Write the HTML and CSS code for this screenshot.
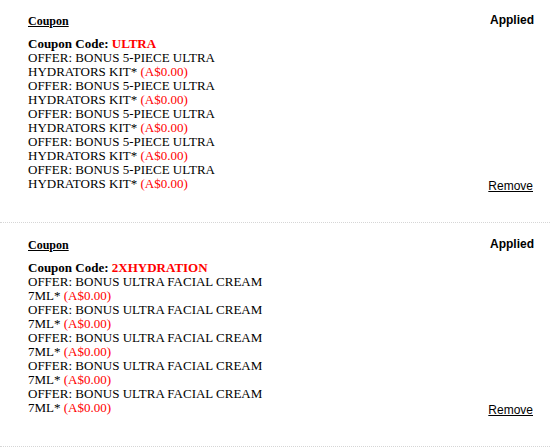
FILE: index.html
```html
<!DOCTYPE html>
<html>
<head>
<meta charset="utf-8">
<link rel="stylesheet" href="styles.css">
</head>
<body>
<div class="coupons">
  <div class="coupon">
    <div class="details">
      <div class="title">Coupon</div>
      <div class="code">Coupon Code: <span class="code-value">ULTRA</span></div>
      <div class="offer">OFFER: BONUS 5-PIECE ULTRA HYDRATORS KIT* <span class="price">(A$0.00)</span></div>
      <div class="offer">OFFER: BONUS 5-PIECE ULTRA HYDRATORS KIT* <span class="price">(A$0.00)</span></div>
      <div class="offer">OFFER: BONUS 5-PIECE ULTRA HYDRATORS KIT* <span class="price">(A$0.00)</span></div>
      <div class="offer">OFFER: BONUS 5-PIECE ULTRA HYDRATORS KIT* <span class="price">(A$0.00)</span></div>
      <div class="offer">OFFER: BONUS 5-PIECE ULTRA HYDRATORS KIT* <span class="price">(A$0.00)</span></div>
    </div>
    <div class="status">
      <div class="applied">Applied</div>
      <a class="remove" href="#">Remove</a>
    </div>
  </div>
  <div class="coupon">
    <div class="details">
      <div class="title">Coupon</div>
      <div class="code">Coupon Code: <span class="code-value">2XHYDRATION</span></div>
      <div class="offer">OFFER: BONUS ULTRA FACIAL CREAM 7ML* <span class="price">(A$0.00)</span></div>
      <div class="offer">OFFER: BONUS ULTRA FACIAL CREAM 7ML* <span class="price">(A$0.00)</span></div>
      <div class="offer">OFFER: BONUS ULTRA FACIAL CREAM 7ML* <span class="price">(A$0.00)</span></div>
      <div class="offer">OFFER: BONUS ULTRA FACIAL CREAM 7ML* <span class="price">(A$0.00)</span></div>
      <div class="offer">OFFER: BONUS ULTRA FACIAL CREAM 7ML* <span class="price">(A$0.00)</span></div>
    </div>
    <div class="status">
      <div class="applied">Applied</div>
      <a class="remove" href="#">Remove</a>
    </div>
  </div>
</div>
</body>
</html>
```
FILE: styles.css
```css
html, body {
  margin: 0;
  padding: 0;
  background: #fff;
}
.coupons {
  width: 550px;
}
.coupon {
  display: flex;
  justify-content: space-between;
  padding: 14px 16px 31px 28px;
  border-bottom: 1px dotted #d6d6d6;
}
.coupon + .coupon {
  padding-top: 15px;
}
.details {
  width: 252px;
  font-family: "Liberation Serif", "Times New Roman", serif;
  font-size: 13px;
  line-height: 14px;
  color: #000;
}
.title {
  font-weight: bold;
  font-size: 12px;
  text-decoration: underline;
  line-height: 14px;
  margin-bottom: 9px;
}
.code {
  font-weight: bold;
}
.code-value {
  color: #ff0000;
}
.price {
  color: #ff0000;
}
.status {
  display: flex;
  flex-direction: column;
  justify-content: space-between;
  align-items: flex-end;
  font-family: "Liberation Sans", Arial, sans-serif;
  font-size: 12px;
  line-height: 14px;
}
.applied {
  font-weight: bold;
  color: #000;
  margin-top: -1px;
}
.remove {
  color: #000;
  text-decoration: underline;
  margin-bottom: -2px;
  margin-right: 1px;
}
```
